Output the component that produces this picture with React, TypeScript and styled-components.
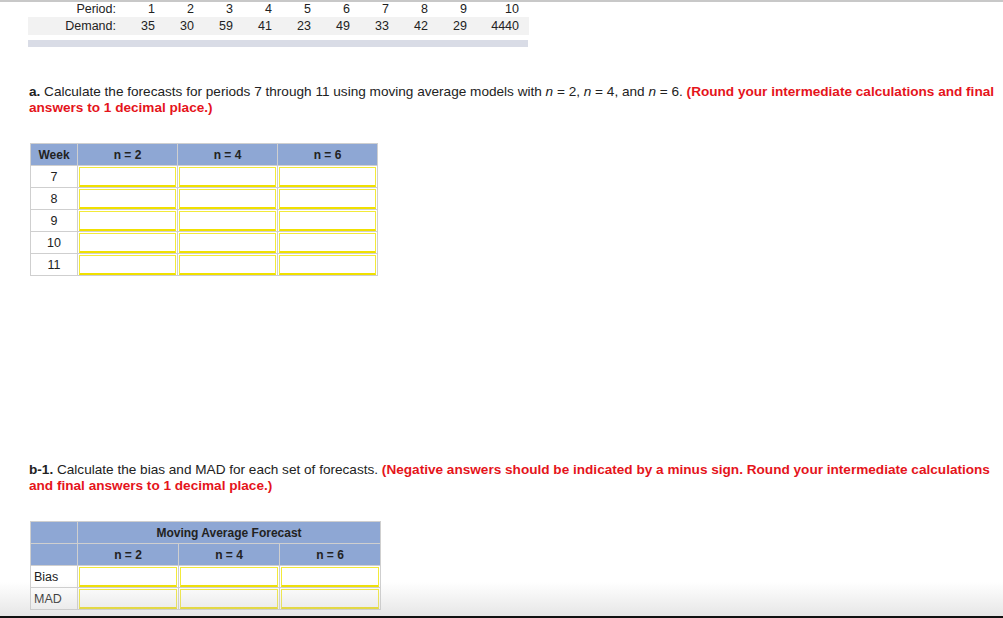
import React from 'react';
import styled, { createGlobalStyle } from 'styled-components';

const Global = createGlobalStyle`
  html, body { margin: 0; padding: 0; background: #fff; }
  body { font-family: "Liberation Sans", Arial, sans-serif; font-size: 13px; color: #222; overflow: hidden; height: 618px; }
`;

const Page = styled.div`
  border-top: 2px solid #c8c8c8;
  height: 616px;
  position: relative;
`;

const DataTable = styled.table`
  margin-left: 28px;
  width: 500px;
  table-layout: fixed;
  border-collapse: collapse;
  font-size: 12.5px;
  td { text-align: right; padding: 0 0 0 0; width: 39px; }
  td:first-child { width: 88px; }
  td:last-child { width: 52px; padding-right: 10px; }
`;

const DataRow = styled.tr<{ $shade?: boolean }>`
  background: ${p => (p.$shade ? '#f2f2f2' : 'transparent')};
  td { height: ${p => (p.$shade ? '18px' : '15px')}; line-height: ${p => (p.$shade ? '18px' : '15px')}; }
`;

const Bar = styled.div`
  margin: 5px 0 0 28px;
  width: 500px;
  height: 7px;
  background: #d9dce6;
`;

const Question = styled.p<{ $top: number }>`
  margin: ${p => p.$top}px 0 0 29px;
  width: 968px;
  font-size: 13.6px;
  line-height: 16px;
  em { font-style: italic; }
`;

const Red = styled.strong`
  color: #e5141b;
`;

const Grid = styled.table<{ $top: number; $first: number; $col: number }>`
  margin: ${p => p.$top}px 0 0 30px;
  border-collapse: collapse;
  font-size: 12px;
  th, td { border: 1px solid #cfcfcf; height: 21px; padding: 0; width: ${p => p.$col}px; }
  th { background: #8ea7d4; font-weight: bold; color: #222; }
  th:first-child, td:first-child { width: ${p => p.$first}px; }
`;

const Label = styled.td<{ $left?: boolean }>`
  text-align: ${p => (p.$left ? 'left' : 'center')};
  padding-left: ${p => (p.$left ? '3px' : '0')} !important;
  font-size: 12.5px;
`;

const Entry = styled.div`
  height: 17px;
  margin: 0 1px;
  border: 1px solid #f3ea3a;
  border-bottom: 2px solid #f0e000;
  background: #fff;
`;

const Shade = styled.div`
  position: absolute;
  left: 0;
  right: 0;
  bottom: 0;
  height: 34px;
  background: linear-gradient(to bottom, rgba(220,220,220,0), rgba(200,200,200,0.45));
  border-bottom: 2px solid #111;
  pointer-events: none;
`;

const periods = [1, 2, 3, 4, 5, 6, 7, 8, 9, 10];
const demand = [35, 30, 59, 41, 23, 49, 33, 42, 29, 4440];

export default function App() {
  return (
    <Page>
      <Global />
      <DataTable>
        <tbody>
          <DataRow>
            <td>Period:</td>
            {periods.map(p => <td key={p}>{p}</td>)}
          </DataRow>
          <DataRow $shade>
            <td>Demand:</td>
            {demand.map((d, i) => <td key={i}>{d}</td>)}
          </DataRow>
        </tbody>
      </DataTable>
      <Bar />
      <Question $top={37}>
        <strong>a.</strong> Calculate the forecasts for periods 7 through 11 using moving average models with <em>n</em> = 2, <em>n</em> = 4, and <em>n</em> = 6.{' '}
        <Red>(Round your intermediate calculations and final answers to 1 decimal place.)</Red>
      </Question>
      <Grid $top={27} $first={46} $col={99}>
        <thead>
          <tr><th>Week</th><th>n = 2</th><th>n = 4</th><th>n = 6</th></tr>
        </thead>
        <tbody>
          {[7, 8, 9, 10, 11].map(w => (
            <tr key={w}>
              <Label>{w}</Label>
              <td><Entry /></td><td><Entry /></td><td><Entry /></td>
            </tr>
          ))}
        </tbody>
      </Grid>
      <Question $top={186}>
        <strong>b-1.</strong> Calculate the bias and MAD for each set of forecasts.{' '}
        <Red>(Negative answers should be indicated by a minus sign. Round your intermediate calculations and final answers to 1 decimal place.)</Red>
      </Question>
      <Grid $top={27} $first={43} $col={100}>
        <thead>
          <tr><th></th><th colSpan={3}>Moving Average Forecast</th></tr>
          <tr><th></th><th>n = 2</th><th>n = 4</th><th>n = 6</th></tr>
        </thead>
        <tbody>
          {['Bias', 'MAD'].map(r => (
            <tr key={r}>
              <Label $left>{r}</Label>
              <td><Entry /></td><td><Entry /></td><td><Entry /></td>
            </tr>
          ))}
        </tbody>
      </Grid>
      <Shade />
    </Page>
  );
}
